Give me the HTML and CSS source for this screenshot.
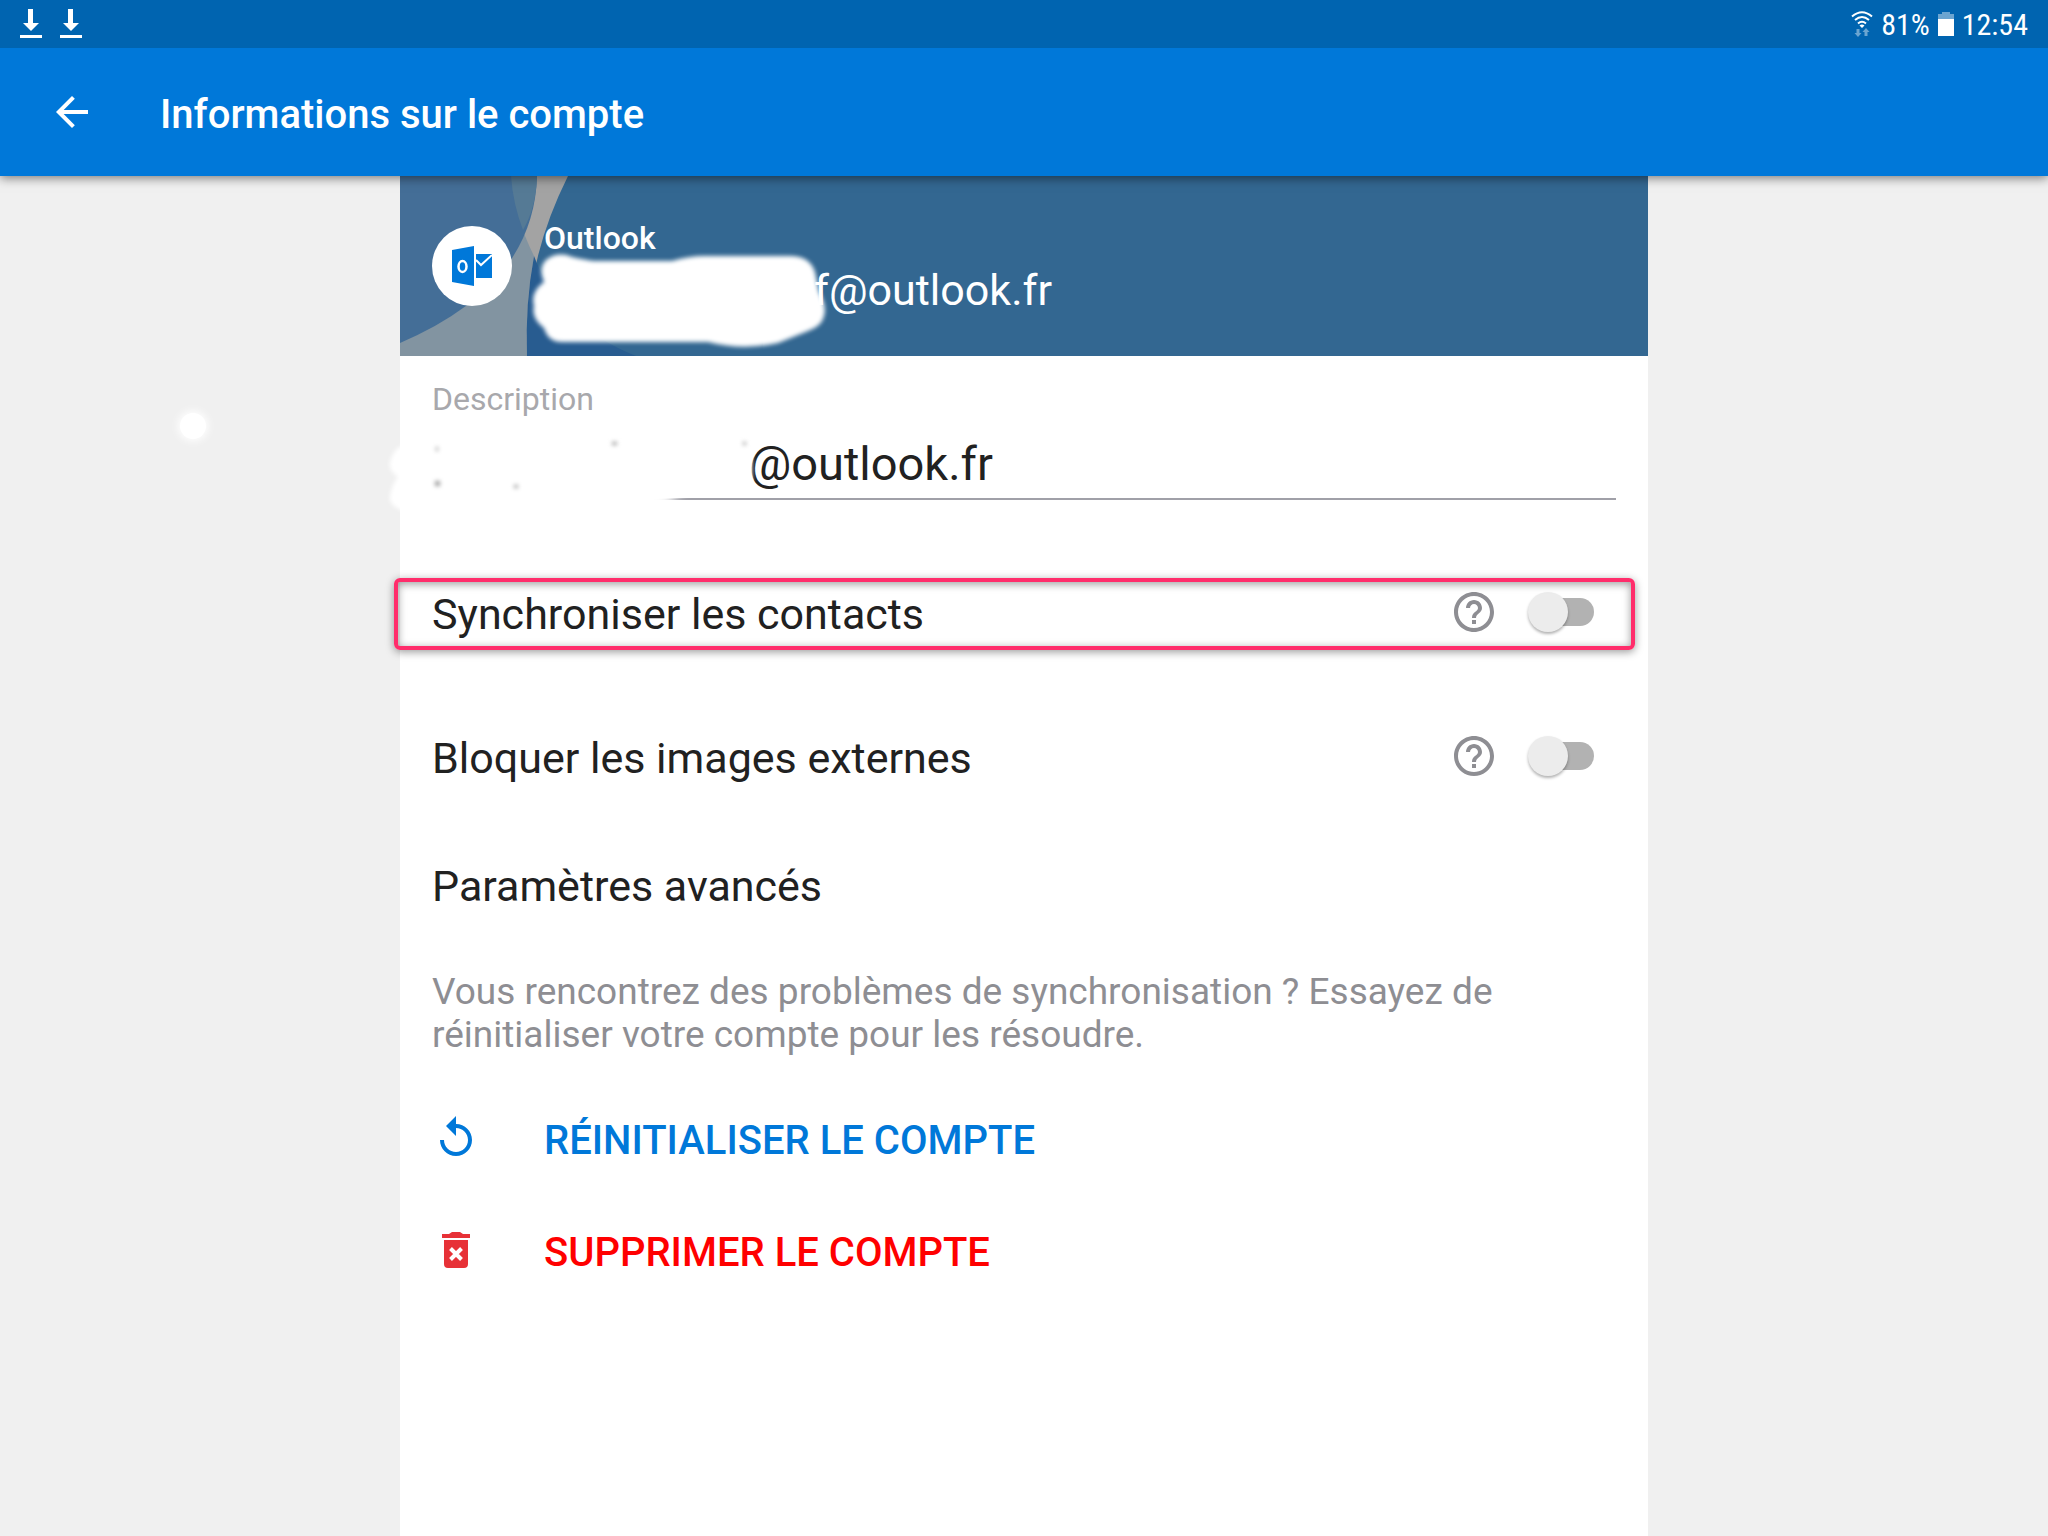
FILE: index.html
```html
<!DOCTYPE html>
<html lang="fr">
<head>
  <meta charset="UTF-8">
  <meta name="viewport" content="width=device-width, initial-scale=1.0">
  <title>Informations sur le compte</title>
  <link rel="stylesheet" href="styles.css">
</head>
<body>
  <div class="status-bar">
    <div class="status-left">
      <svg width="22" height="30" viewBox="0 0 22 30"><path d="M8 0h5v14h6l-8 8-8-8h5zM0 26h22v3H0z" fill="#fff"/></svg>
      <svg width="22" height="30" viewBox="0 0 22 30"><path d="M8 0h5v14h6l-8 8-8-8h5zM0 26h22v3H0z" fill="#fff"/></svg>
    </div>
    <div class="status-right">
      <svg class="wifi" width="22" height="26" viewBox="0 0 22 26">
        <g fill="none" stroke="#fff" stroke-width="2">
          <path d="M1 5.500Q11-3 21 5.500"/>
          <path d="M4 9Q11 3 18 9"/>
          <path d="M7 12.500Q11 9 15 12.500"/>
        </g>
        <path d="M8.500 14.500Q11 12.500 13.500 14.500L11 17z" fill="#fff"/>
        <path d="M5.500 18h3v4h2L7 26l-3.500-4h2zM13.500 25v-4h-2L15 17l3.500 4h-2v4z" fill="#6ba5d1"/>
      </svg>
      <span>81%</span>
      <svg class="battery" width="16" height="24" viewBox="0 0 16 24"><path d="M4 0h8v2h4v5H0V2h4z" fill="#6ba5d1"/><path d="M0 7h16v17H0z" fill="#fff"/></svg>
      <span>12:54</span>
    </div>
  </div>

  <header class="toolbar">
    <button class="back" aria-label="Retour">
      <svg width="32" height="32" viewBox="4 4 16 16"><path d="M20 11H7.830l5.590-5.590L12 4l-8 8 8 8 1.410-1.410L7.830 13H20v-2z" fill="#fff"/></svg>
    </button>
    <h1>Informations sur le compte</h1>
  </header>

  <main class="card">
    <section class="account">
      <svg class="account-art" width="240" height="180" viewBox="0 0 240 180">
        <path d="M0 0H168Q124 88 127 180H0z" fill="#a3a3a3"/>
        <path d="M0 0H111Q114 40 134 80Q125 128 127 180H0z" fill="#8294a1"/>
        <path d="M0 0H137Q134 110 0 167z" fill="#446e97"/>
        <path d="M111 0H137Q136 32 123 54Q113 28 111 0z" fill="#557a95"/>
        <path d="M134 80Q125 128 127 180H236Q160 150 134 80z" fill="#285c90"/>
      </svg>
      <span class="avatar">
        <svg width="40" height="40" viewBox="0 0 40 40">
          <path d="M0 4L22 0V40L0 36z" fill="#0078d9"/>
          <ellipse cx="10.500" cy="20.500" rx="4" ry="5.500" fill="none" stroke="#fff" stroke-width="2.500"/>
          <path d="M24 8H40V32H24z" fill="#0078d9"/>
          <path d="M24 14l5 5L40 9" fill="none" stroke="#fff" stroke-width="2"/>
        </svg>
      </span>
      <div class="account-text">
        <h2>Outlook</h2>
        <p>f@outlook.fr</p>
      </div>
      <svg class="mask account-mask" width="320" height="110" viewBox="0 0 320 110">
        <path d="M18 12Q30 3 44 9Q58 12 66 13H144Q162 8 176 8H262Q282 8 287 24L291 44Q299 58 296 68Q294 78 280 83L250 95Q215 103 180 94H34Q20 94 16 80Q3 70 6 58Q2 44 16 34Q10 20 18 12z"/>
      </svg>
    </section>

    <div class="field">
      <label for="description">Description</label>
      <input id="description" type="text" value="@outlook.fr">
      <svg class="mask field-mask" width="380" height="110" viewBox="0 0 380 110">
        <path d="M46 20Q50 2 66 3Q100 20 132 21H221Q260 14 310 8L342 6Q366 10 370 22V60Q345 66 310 71L284 80L239 90L168 95L78 99Q30 99 24 90Q6 84 8 74Q10 62 16 55Q6 48 8 40Q12 24 26 22z"/>
        <path class="mark" d="M54 25h2v4h-2zM53 59h5v5h-5zM230 20h5v3h-5zM132 63h4v3h-4zM361 20h3v3h-3z"/>
      </svg>
    </div>

    <div class="row row-highlight">
      <label for="sync">Synchroniser les contacts</label>
      <button class="help" aria-label="Aide sur la synchronisation">
        <svg width="40" height="40" viewBox="2 2 20 20"><path d="M11 18h2v-2h-2v2zm1-16C6.480 2 2 6.480 2 12s4.480 10 10 10 10-4.480 10-10S17.520 2 12 2zm0 18c-4.410 0-8-3.590-8-8s3.590-8 8-8 8 3.590 8 8-3.590 8-8 8zm0-14c-2.210 0-4 1.790-4 4h2c0-1.100.900-2 2-2s2 .900 2 2c0 2-3 1.750-3 5h2c0-2.250 3-2.500 3-5 0-2.210-1.790-4-4-4z"/></svg>
      </button>
      <input class="switch" id="sync" type="checkbox">
    </div>

    <div class="row">
      <label for="block">Bloquer les images externes</label>
      <button class="help" aria-label="Aide sur les images externes">
        <svg width="40" height="40" viewBox="2 2 20 20"><path d="M11 18h2v-2h-2v2zm1-16C6.480 2 2 6.480 2 12s4.480 10 10 10 10-4.480 10-10S17.520 2 12 2zm0 18c-4.410 0-8-3.590-8-8s3.590-8 8-8 8 3.590 8 8-3.590 8-8 8zm0-14c-2.210 0-4 1.790-4 4h2c0-1.100.900-2 2-2s2 .900 2 2c0 2-3 1.750-3 5h2c0-2.250 3-2.500 3-5 0-2.210-1.790-4-4-4z"/></svg>
      </button>
      <input class="switch" id="block" type="checkbox">
    </div>

    <a class="advanced" href="#">Paramètres avancés</a>

    <p class="hint">Vous rencontrez des problèmes de synchronisation ? Essayez de réinitialiser votre compte pour les résoudre.</p>

    <button class="action reset">
      <svg width="48" height="48" viewBox="0 0 24 24"><path d="M12 5V1L7 6l5 5V7c3.310 0 6 2.690 6 6s-2.690 6-6 6-6-2.690-6-6H4c0 4.420 3.580 8 8 8s8-3.580 8-8-3.580-8-8-8z" fill="#0078d9"/></svg>
      <span>RÉINITIALISER LE COMPTE</span>
    </button>
    <button class="action delete">
      <svg width="48" height="48" viewBox="0 0 48 48">
        <path d="M10 8h7l3-2h8l3 2h7v4H10zM12 14h24v24q0 4-4 4H16q-4 0-4-4z" fill="#e73137"/>
        <path d="M18.500 22.500l11 11M29.500 22.500l-11 11" stroke="#fff" stroke-width="4"/>
      </svg>
      <span>SUPPRIMER LE COMPTE</span>
    </button>
  </main>

  <span class="dot"></span>
</body>
</html>
```
FILE: styles.css
```css
* {
  box-sizing: border-box;
}

body {
  font-family: Roboto, sans-serif;
  margin: 0;
  min-height: 100vh;
  display: flex;
  flex-direction: column;
  background: #f0f0f0;
  color: #212121;
  overflow-x: hidden;
}

h1, h2, p {
  margin: 0;
}

button {
  border: none;
  padding: 0;
  background: none;
  font-family: inherit;
  cursor: pointer;
}

svg {
  display: block;
}

.status-bar {
  position: relative;
  z-index: 2;
  height: 48px;
  padding: 0 20px;
  display: flex;
  align-items: center;
  justify-content: space-between;
  background: #0064b0;
  color: #fff;
  font-family: "Roboto Condensed", Roboto, sans-serif;
  font-size: 30px;
  font-stretch: condensed;
}

.status-left {
  display: flex;
  gap: 18px;
}

.status-right {
  display: flex;
  align-items: center;
  gap: 8px;
}

.toolbar {
  position: relative;
  z-index: 1;
  height: 128px;
  padding: 0 56px;
  display: flex;
  align-items: center;
  gap: 72px;
  background: #0078d9;
  color: #fff;
  box-shadow: 0 2px 10px rgba(0, 0, 0, 0.5);
}

.toolbar h1 {
  padding-top: 4px;
  font-size: 40px;
  font-weight: 500;
}

.card {
  flex: 1;
  width: 100%;
  max-width: 1248px;
  margin: 0 auto;
  background: #fff;
}

.account {
  position: relative;
  height: 180px;
  padding: 0 32px;
  display: flex;
  align-items: center;
  gap: 32px;
  background: #336791;
  color: #fff;
}

.account-art {
  position: absolute;
  left: 0;
  top: 0;
}

.avatar {
  position: relative;
  width: 80px;
  height: 80px;
  display: flex;
  align-items: center;
  justify-content: center;
  background: #fff;
  border-radius: 50%;
}

.account-text {
  position: relative;
  padding-top: 8px;
}

.account-text h2 {
  font-size: 32px;
  font-weight: 500;
  line-height: 40px;
}

.account-text p {
  padding-left: 270px;
  font-size: 43px;
  line-height: 64px;
}

/* brush strokes that hide the user name */
.mask {
  position: absolute;
  fill: #fff;
  filter: blur(2px);
}

.account-mask {
  left: 128px;
  top: 72px;
}

.field {
  position: relative;
  padding: 24px 32px 0;
  height: 184px;
}

.field label {
  display: block;
  color: #a8a8ac;
  font-size: 32px;
  line-height: 38px;
}

.field input {
  display: block;
  width: 100%;
  height: 82px;
  padding: 10px 0 0 317px;
  border: none;
  border-bottom: 2px solid #a0a0a8;
  outline: none;
  background: none;
  color: #212121;
  font-family: inherit;
  font-size: 47px;
}

.field-mask {
  left: -18px;
  top: 66px;
}

.field-mask .mark {
  fill: #999;
}

.row {
  position: relative;
  height: 144px;
  padding: 0 54px 0 32px;
  display: flex;
  align-items: center;
  gap: 34px;
}

.row label {
  flex: 1;
  padding-top: 4px;
  font-size: 43px;
}

.row-highlight::after {
  content: '';
  box-sizing: border-box;
  position: absolute;
  left: -6px;
  right: 13px;
  top: 38px;
  height: 72px;
  border: 4px solid #ff2d6b;
  border-radius: 6px;
  box-shadow: 0 2px 8px rgba(0, 0, 0, 0.4), inset 0 2px 8px rgba(0, 0, 0, 0.4);
  pointer-events: none;
}

.help svg {
  fill: #8e8e93;
}

.switch {
  appearance: none;
  position: relative;
  width: 66px;
  height: 40px;
  margin: 0;
  cursor: pointer;
}

.switch::before {
  content: '';
  position: absolute;
  left: 10px;
  right: 0;
  top: 6px;
  height: 28px;
  border-radius: 14px;
  background: #b2b2b2;
}

.switch::after {
  content: '';
  position: absolute;
  left: 0;
  top: 0;
  width: 40px;
  height: 40px;
  border-radius: 50%;
  background: #ececec;
  box-shadow: 0 2px 3px rgba(0, 0, 0, 0.3);
}

.switch:checked::after {
  left: 26px;
}

.advanced {
  display: block;
  padding: 32px;
  color: inherit;
  font-size: 43px;
  line-height: 52px;
  text-decoration: none;
}

.hint {
  padding: 26px 120px 26px 32px;
  color: #8e8e93;
  font-size: 37px;
  line-height: 43px;
}

.action {
  width: 100%;
  height: 112px;
  padding: 0 32px;
  display: flex;
  align-items: center;
  gap: 64px;
  font-size: 40px;
  font-weight: 500;
}

.action span {
  padding-top: 4px;
}

.reset {
  color: #0078d9;
}

.delete {
  color: #ff0000;
}

.dot {
  position: absolute;
  left: 180px;
  top: 413px;
  width: 26px;
  height: 26px;
  border-radius: 50%;
  background: #fff;
  box-shadow: 0 0 8px 2px #fff;
}
```
